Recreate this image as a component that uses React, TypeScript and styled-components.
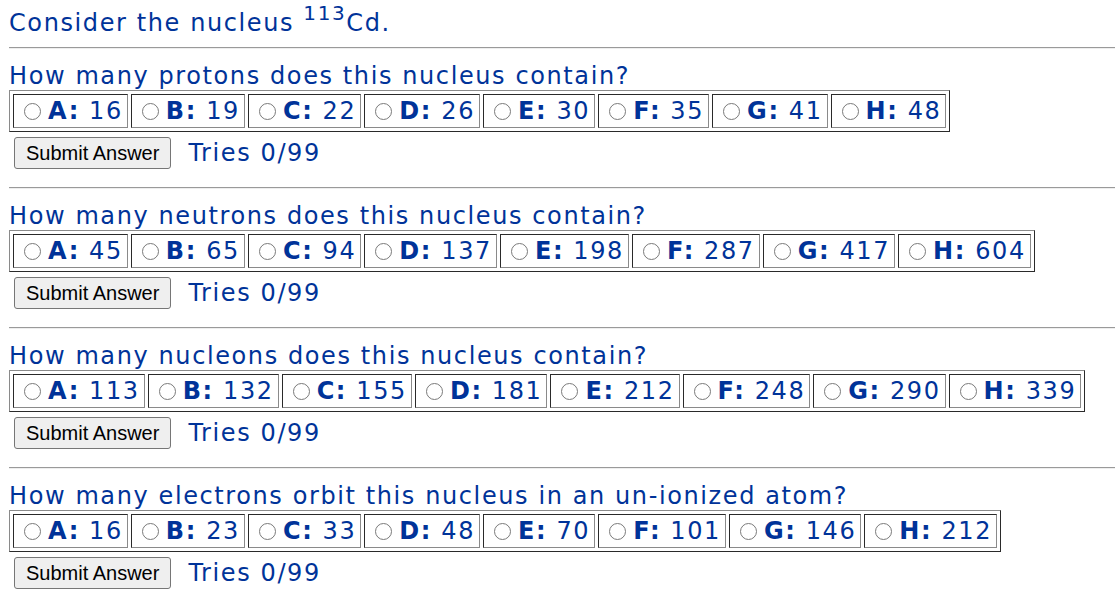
import styled, { createGlobalStyle } from 'styled-components';

const Global = createGlobalStyle`
  body {
    margin: 0;
    background: #fff;
  }
`;

const Page = styled.div`
  padding: 9px 0 0 9px;
  font-family: "DejaVu Sans", Verdana, sans-serif;
  font-size: 24px;
  letter-spacing: 1.6px;
  color: #003399;
`;

const Title = styled.div`
  line-height: 28px;
  margin-bottom: 10px;
`;

const Sup = styled.sup`
  font-size: 20px;
  line-height: 0;
  vertical-align: 11px;
`;

const Rule = styled.hr`
  margin: 0;
  border: 0;
  border-top: 1px solid #9a9a9a;
  border-bottom: 1px solid #eeeeee;
  height: 0;
`;

const Section = styled.div`
  padding: 13px 0 18px;
`;

const Question = styled.div`
  line-height: 28px;
`;

const Choices = styled.div`
  display: inline-flex;
  gap: 3px;
  padding: 3px;
  border: 1px solid;
  border-color: #8a8a8a #2a2a2a #2a2a2a #8a8a8a;
`;

const Choice = styled.label`
  display: flex;
  align-items: center;
  height: 32px;
  padding: 0 4px 0 0;
  border: 1px solid;
  border-color: #2a2a2a #8a8a8a #8a8a8a #2a2a2a;
  white-space: nowrap;
`;

const Radio = styled.span`
  display: inline-block;
  flex: 0 0 auto;
  box-sizing: border-box;
  width: 17px;
  height: 17px;
  margin: 1px 7px 0 10px;
  border: 1.5px solid #7a7a7a;
  border-radius: 50%;
  background: #fff;
`;

const Letter = styled.b`
  font-weight: bold;
`;

const Actions = styled.div`
  display: flex;
  align-items: center;
  margin: 5px 0 0 5px;
`;

const Submit = styled.button`
  font-family: "Liberation Sans", Arial, sans-serif;
  font-size: 20px;
  letter-spacing: 0;
  height: 32px;
  padding: 0 11px;
  color: #000;
  background: #efefef;
  border: 1px solid #767676;
  border-radius: 3px;
`;

const Tries = styled.span`
  margin-left: 17px;
`;

type Q = { text: string; answers: string[] };

const questions: Q[] = [
  { text: 'How many protons does this nucleus contain?', answers: ['16', '19', '22', '26', '30', '35', '41', '48'] },
  { text: 'How many neutrons does this nucleus contain?', answers: ['45', '65', '94', '137', '198', '287', '417', '604'] },
  { text: 'How many nucleons does this nucleus contain?', answers: ['113', '132', '155', '181', '212', '248', '290', '339'] },
  { text: 'How many electrons orbit this nucleus in an un-ionized atom?', answers: ['16', '23', '33', '48', '70', '101', '146', '212'] },
];

const letters = 'ABCDEFGH';

export default function App() {
  return (
    <>
      <Global />
      <Page>
        <Title>
          Consider the nucleus <Sup>113</Sup>Cd.
        </Title>
        {questions.map((q, qi) => (
          <div key={qi}>
            <Rule />
            <Section>
              <Question>{q.text}</Question>
              <Choices role="radiogroup">
                {q.answers.map((a, i) => (
                  <Choice key={i}>
                    <Radio role="radio" aria-checked="false" />
                    <Letter>{letters[i]}:</Letter>&nbsp;{a}
                  </Choice>
                ))}
              </Choices>
              <Actions>
                <Submit>Submit Answer</Submit>
                <Tries>Tries 0/99</Tries>
              </Actions>
            </Section>
          </div>
        ))}
      </Page>
    </>
  );
}
